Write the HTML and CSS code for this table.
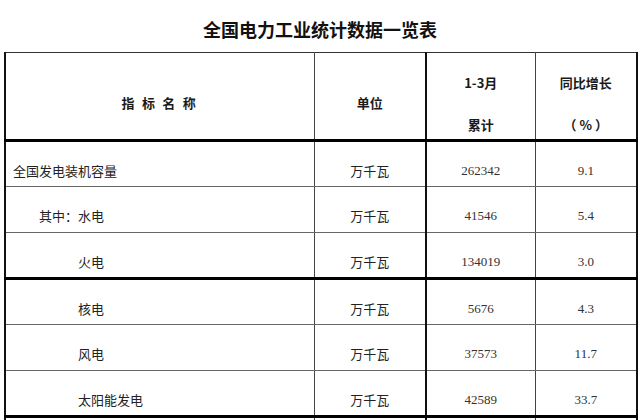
FILE: index.html
```html
<!DOCTYPE html>
<html lang="zh-CN">
<head>
<meta charset="utf-8">
<title>全国电力工业统计数据一览表</title>
<link rel="stylesheet" href="styles.css">
</head>
<body>
<h1 class="title">全国电力工业统计数据一览表</h1>
<table class="stats">
  <colgroup>
    <col class="c-name"><col class="c-unit"><col class="c-total"><col class="c-growth">
  </colgroup>
  <thead>
    <tr>
      <th class="single name-head">指 标 名 称</th>
      <th class="single unit-col">单位</th>
      <th class="double total-col"><div class="l1">1-3月</div><div>累计</div></th>
      <th class="double"><div class="l1">同比增长</div><div class="pct">（%）</div></th>
    </tr>
  </thead>
  <tbody>
    <tr>
      <td class="name lv0">全国发电装机容量</td><td class="unit unit-col">万千瓦</td><td class="num total-col">262342</td><td class="num">9.1</td>
    </tr>
    <tr>
      <td class="name lv1">其中：水电</td><td class="unit unit-col">万千瓦</td><td class="num total-col">41546</td><td class="num">5.4</td>
    </tr>
    <tr class="group-end">
      <td class="name lv2">火电</td><td class="unit unit-col">万千瓦</td><td class="num total-col">134019</td><td class="num">3.0</td>
    </tr>
    <tr>
      <td class="name lv2">核电</td><td class="unit unit-col">万千瓦</td><td class="num total-col">5676</td><td class="num">4.3</td>
    </tr>
    <tr>
      <td class="name lv2">风电</td><td class="unit unit-col">万千瓦</td><td class="num total-col">37573</td><td class="num">11.7</td>
    </tr>
    <tr class="group-end">
      <td class="name lv2">太阳能发电</td><td class="unit unit-col">万千瓦</td><td class="num total-col">42589</td><td class="num">33.7</td>
    </tr>
    <tr>
      <td class="name lv2"></td><td class="unit unit-col"></td><td class="num total-col"></td><td class="num"></td>
    </tr>
  </tbody>
</table>
</body>
</html>
```

FILE: styles.css
```css
html, body {
  margin: 0;
  padding: 0;
  background: #ffffff;
}

body {
  width: 640px;
  height: 420px;
  overflow: hidden;
  font-family: "Noto Sans CJK SC", "Noto Sans", sans-serif;
  color: #222222;
  text-spacing-trim: space-all;
}

.title {
  margin: 0;
  height: 52px;
  box-sizing: border-box;
  padding-top: 19px;
  font-size: 18px;
  line-height: 20px;
  font-weight: bold;
  text-align: center;
  color: #111111;
}

.stats {
  margin-left: 4px;
  width: 632px;
  border-collapse: collapse;
  table-layout: fixed;
  border-left: 2px solid #111111;
  border-right: 2px solid #111111;
  border-top: 1px solid #333333;
}

.c-name { width: 309px; }
.c-unit { width: 112px; }
.c-total { width: 109px; }
.c-growth { width: 102px; }

th, td {
  padding: 0;
  border-left: 1px solid #444444;
  border-right: 1px solid #444444;
  font-size: 13px;
  line-height: 16px;
  text-align: center;
}

.total-col {
  border-left: 2px solid #111111;
}

thead tr {
  height: 88px;
}

thead th {
  border-bottom: 3px solid #000000;
  font-weight: bold;
  color: #1a1a1a;
}

th.single {
  vertical-align: middle;
  padding-top: 14px;
}

th.double {
  vertical-align: top;
  padding-top: 20px;
}

th.double div {
  line-height: 20px;
}

th.double div.l1 {
  margin-bottom: 22px;
}

th.double div.pct {
  letter-spacing: 3px;
  padding-left: 3px;
}

.name-head {
  letter-spacing: 2.2px;
}

tbody tr {
  height: 46px;
}

tbody td {
  padding-top: 21px;
  padding-bottom: 0;
  border-bottom: 1px solid #666666;
  vertical-align: top;
}

tbody tr.group-end td {
  border-bottom: 3px solid #000000;
}

td.name {
  text-align: left;
  color: #222222;
}

td.lv0 { padding-left: 7px; }
td.lv1 { padding-left: 33px; }
td.lv2 { padding-left: 72px; }

td.unit {
  color: #222222;
}

td.num {
  font-family: "Liberation Serif", "Times New Roman", serif;
  color: #333333;
}
```
